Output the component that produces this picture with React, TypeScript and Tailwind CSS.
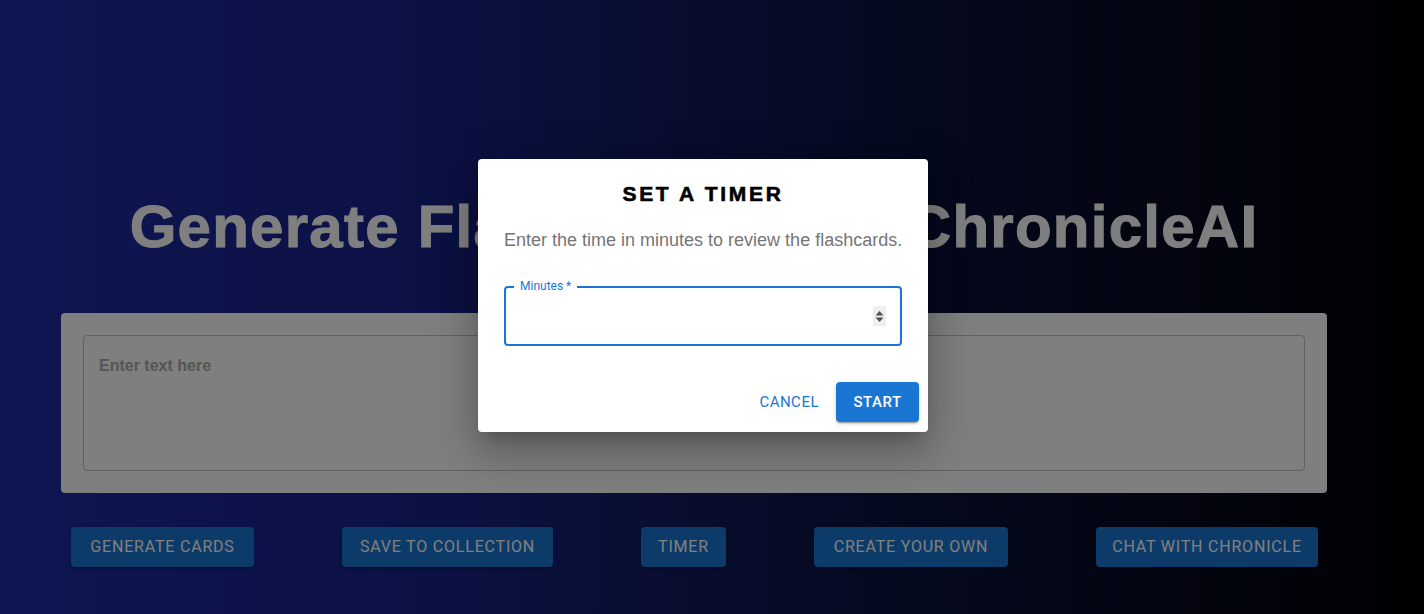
import React from "react";

const actions = [
  { label: "Generate Cards", w: "w-[183px]" },
  { label: "Save to Collection", w: "w-[211px]" },
  { label: "Timer", w: "w-[85px]" },
  { label: "Create Your Own", w: "w-[194px]" },
  { label: "Chat with Chronicle", w: "w-[222px]" },
];

function Spinner() {
  return (
    <div className="flex h-[20px] w-[13px] items-center justify-center bg-[#efefef]">
      <svg width="9" height="13" viewBox="0 0 9 13">
        <path d="M4.5 1 L8.5 5.5 L0.5 5.5 Z" fill="#505050" />
        <path d="M0.5 7.5 L8.5 7.5 L4.5 12 Z" fill="#505050" />
      </svg>
    </div>
  );
}

function TimerDialog() {
  return (
    <div className="absolute left-[478px] top-[159px] flex w-[450px] flex-col rounded-[4px] bg-white shadow-[0_11px_15px_-7px_rgba(0,0,0,0.2),0_24px_38px_3px_rgba(0,0,0,0.14),0_9px_46px_8px_rgba(0,0,0,0.12)]">
      {/* Title */}
      <h2 className="pt-[19px] text-center font-['Liberation_Sans',Arial,sans-serif] text-[21px] font-black leading-[32px] tracking-[2.7px] text-black [-webkit-text-stroke:0.6px_black]">
        SET A TIMER
      </h2>

      {/* Body */}
      <p className="mt-[18px] pl-[26px] font-['Liberation_Sans',Arial,sans-serif] text-[18px] leading-[24px] text-[#757575]">
        Enter the time in minutes to review the flashcards.
      </p>

      <div className="px-[26px]">
        <div className="relative mt-[34px] flex h-[60px] items-center justify-end rounded-[4px] border-2 border-[#1976d2] pr-[14px]">
          <span className="absolute left-[8px] top-[-9px] bg-white px-[6px] font-['Roboto',sans-serif] text-[12px] leading-[14px] text-[#1976d2]">
            Minutes *
          </span>
          <Spinner />
        </div>
      </div>

      {/* Actions */}
      <div className="mt-[36px] flex items-center justify-end gap-[8px] pb-[10px] pr-[9px] font-['Roboto',sans-serif] text-[15px] tracking-[0.5px]">
        <button className="h-[40px] rounded-[4px] px-[9px] uppercase text-[#1976d2]">
          Cancel
        </button>
        <button className="h-[40px] w-[83px] rounded-[4px] bg-[#1976d2] font-medium uppercase text-white shadow-[0_3px_1px_-2px_rgba(0,0,0,0.2),0_2px_2px_0_rgba(0,0,0,0.14),0_1px_5px_0_rgba(0,0,0,0.12)]">
          Start
        </button>
      </div>
    </div>
  );
}

export default function App() {
  return (
    <div className="relative h-[614px] w-[1424px] overflow-hidden bg-[linear-gradient(to_right,#1e2ca4_0%,#182388_30%,#0c1440_62%,#020206_100%)]">
      <div className="ml-[61px] flex w-[1266px] flex-col pt-[197px]">
        <h1 className="text-center font-['Liberation_Sans',Arial,sans-serif] text-[60px] font-bold leading-[60px] tracking-[1.25px] text-white [-webkit-text-stroke:1px_white]">
          Generate Flashcards with ChronicleAI
        </h1>

        {/* Input card */}
        <div className="mt-[56px] rounded-[4px] bg-white p-[22px]">
          <div className="h-[136px] rounded-[4px] border border-[#c4c4c4] px-[15px] py-[17px]">
            <span className="font-['Liberation_Sans',Arial,sans-serif] text-[16px] font-bold leading-[24px] text-[#ababab]">
              Enter text here
            </span>
          </div>
        </div>

        {/* Buttons */}
        <div className="ml-[10px] mt-[34px] flex gap-[88px]">
          {actions.map((a) => (
            <button
              key={a.label}
              className={`h-[40px] ${a.w} rounded-[4px] bg-[#1976d2] font-['Roboto',sans-serif] text-[16px] uppercase tracking-[0.8px] text-white shadow-[0_3px_1px_-2px_rgba(0,0,0,0.2),0_2px_2px_0_rgba(0,0,0,0.14),0_1px_5px_0_rgba(0,0,0,0.12)]`}
            >
              {a.label}
            </button>
          ))}
        </div>
      </div>

      {/* Scrim */}
      <div className="absolute inset-0 bg-black/50">
        <TimerDialog />
      </div>
    </div>
  );
}
